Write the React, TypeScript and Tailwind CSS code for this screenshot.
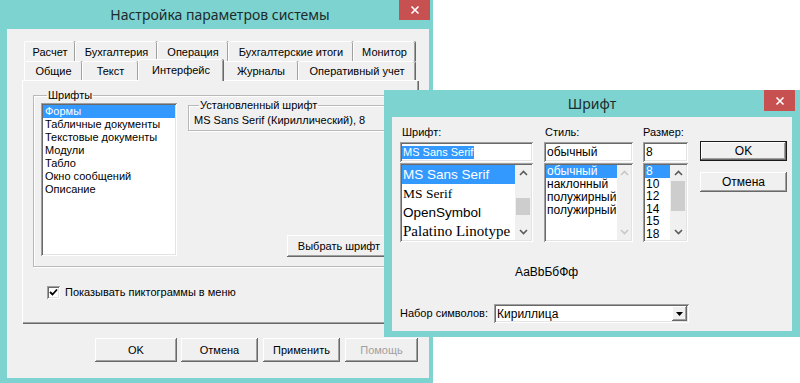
import React from "react";

const RAISED =
  "bg-[#f0f0f0] shadow-[inset_-1px_-1px_#696969,inset_1px_1px_#ffffff,inset_-2px_-2px_#a0a0a0,inset_2px_2px_#f0f0f0]";
const SUNKEN =
  "bg-white shadow-[inset_1px_1px_#a0a0a0,inset_-1px_-1px_#ffffff,inset_2px_2px_#696969,inset_-2px_-2px_#e3e3e3]";

function CloseX() {
  return (
    <svg width="10" height="10" viewBox="0 0 10 10">
      <path d="M1.5 1.5 L8.5 8.5 M8.5 1.5 L1.5 8.5" stroke="#ffffff" strokeWidth="1.6" />
    </svg>
  );
}

function Chevron({ up, color }: { up?: boolean; color: string }) {
  return (
    <svg width="9" height="6" viewBox="0 0 9 6">
      <path
        d={up ? "M1 5 L4.5 1.5 L8 5" : "M1 1 L4.5 4.5 L8 1"}
        stroke={color}
        strokeWidth="1.6"
        fill="none"
      />
    </svg>
  );
}

function VScroll({
  thumbTop,
  thumbH,
  disabled,
}: {
  thumbTop?: number;
  thumbH?: number;
  disabled?: boolean;
}) {
  const c = disabled ? "#c8c8c8" : "#5a5a5a";
  return (
    <div className="w-[16px] h-full flex flex-col bg-[#f0f0f0]">
      <div className="h-[16px] flex items-center justify-center">
        <Chevron up color={c} />
      </div>
      <div className="flex-1 flex flex-col">
        {!disabled && thumbH ? (
          <>
            <div style={{ height: thumbTop }} />
            <div className="bg-[#cdcdcd] mx-[1px]" style={{ height: thumbH }} />
          </>
        ) : null}
      </div>
      <div className="h-[16px] flex items-center justify-center">
        <Chevron color={c} />
      </div>
    </div>
  );
}

function Tab({ label, w, selected }: { label: string; w: number; selected?: boolean }) {
  if (selected) {
    return (
      <div
        className="relative z-10 h-[22px] -mb-[1px] bg-[#f0f0f0] border-t border-l border-white rounded-t-[2px] shadow-[inset_-1px_0_#a0a0a0,1px_0_#696969] flex items-start justify-center pt-[2px]"
        style={{ width: w }}
      >
        {label}
      </div>
    );
  }
  return (
    <div
      className="h-full bg-[#f0f0f0] border-t border-l border-white rounded-t-[2px] shadow-[inset_-1px_0_#a0a0a0,1px_0_#696969] flex items-center justify-center pt-[1px]"
      style={{ width: w }}
    >
      {label}
    </div>
  );
}

function MainWindow() {
  const fontsList = [
    "Формы",
    "Табличные документы",
    "Текстовые документы",
    "Модули",
    "Табло",
    "Окно сообщений",
    "Описание",
  ];
  return (
    <div className="absolute left-0 top-0 w-[433px] h-[383px] bg-[#7dd3d0] flex flex-col pl-[7px] pr-[4px] pb-[5px]">
      <div className="relative h-[29px] flex items-center justify-center">
        <span className="font-['Noto_Sans',sans-serif] text-[14px] text-[#1c2b2b] -mt-[1px] ml-[4px]">
          Настройка параметров системы
        </span>
        <div className="absolute right-[-1px] top-0 w-[31px] h-[20px] bg-[#c75050] flex items-center justify-center">
          <CloseX />
        </div>
      </div>
      <div className="flex-1 bg-[#f0f0f0] flex flex-col pt-[12px] pl-[15px] pr-[11px]">
        {/* tabs row 1 */}
        <div className="flex h-[20px] pl-[2px]">
          <Tab label="Расчет" w={51} />
          <Tab label="Бухгалтерия" w={82} />
          <Tab label="Операция" w={71} />
          <Tab label="Бухгалтерские итоги" w={125} />
          <Tab label="Монитор" w={62} />
        </div>
        {/* tabs row 2 */}
        <div className="flex items-end h-[19px] pl-[2px]">
          <Tab label="Общие" w={58} />
          <Tab label="Текст" w={56} />
          <Tab label="Интерфейс" w={85} selected />
          <Tab label="Журналы" w={75} />
          <Tab label="Оперативный учет" w={117} />
        </div>
        {/* panel */}
        <div className="h-[243px] border-t border-l border-white shadow-[inset_-1px_-1px_#a0a0a0,1px_1px_#696969] flex flex-col">
          <fieldset className="ml-[10px] mt-[8px] w-[377px] h-[178px] border border-[#b9b9b9] shadow-[inset_1px_1px_#ffffff,1px_1px_#ffffff] px-[7px] pt-[1px]">
            <legend className="ml-[6px] px-[1px] leading-[13px]">Шрифты</legend>
            <div className="flex h-[153px]">
              <div className={`w-[136px] h-full ${SUNKEN} p-[2px] flex flex-col`}>
                {fontsList.map((t, i) => (
                  <div
                    key={t}
                    className={
                      i === 0
                        ? "h-[13px] leading-[13px] px-[2px] bg-[#3399ff] text-white"
                        : "h-[13px] leading-[13px] px-[2px]"
                    }
                  >
                    {t}
                  </div>
                ))}
              </div>
              <div className="flex-1 ml-[11px] flex flex-col justify-between">
                <fieldset className="-mt-[4px] h-[32px] border border-[#b9b9b9] shadow-[inset_1px_1px_#ffffff,1px_1px_#ffffff] px-[5px]">
                  <legend className="ml-[5px] px-[1px] leading-[13px]">Установленный шрифт</legend>
                  <div className="leading-[13px] mt-[2px]">MS Sans Serif (Кириллический), 8</div>
                </fieldset>
                <div
                  className={`ml-[99px] w-[104px] h-[22px] ${RAISED} flex items-center justify-center -mb-[1px]`}
                >
                  Выбрать шрифт
                </div>
              </div>
            </div>
          </fieldset>
          <div className="flex items-center ml-[24px] mt-[17px]">
            <div className={`w-[13px] h-[13px] ${SUNKEN} flex items-center justify-center`}>
              <svg width="9" height="9" viewBox="0 0 9 9">
                <path d="M1 4 L3.5 6.5 L8 1.5" stroke="#000" strokeWidth="1.8" fill="none" />
              </svg>
            </div>
            <span className="ml-[5px]">Показывать пиктограммы в меню</span>
          </div>
        </div>
        {/* buttons */}
        <div className="flex justify-end mt-[15px] h-[24px]">
          <div className={`w-[82px] h-full ${RAISED} flex items-center justify-center`}>OK</div>
          <div className={`ml-[4px] w-[77px] h-full ${RAISED} flex items-center justify-center`}>
            Отмена
          </div>
          <div className={`ml-[5px] w-[77px] h-full ${RAISED} flex items-center justify-center`}>
            Применить
          </div>
          <div
            className={`ml-[5px] w-[73px] h-full ${RAISED} flex items-center justify-center text-[#a0a0a0]`}
          >
            Помощь
          </div>
        </div>
      </div>
    </div>
  );
}

function FontDialog() {
  return (
    <div className="absolute left-[384px] top-[90px] w-[416px] h-[247px] bg-[#7dd3d0] flex flex-col px-[8px] pb-[6px]">
      <div className="relative h-[27px] flex items-center justify-center">
        <span className="font-['Noto_Sans',sans-serif] text-[14px] text-[#1c2b2b]">Шрифт</span>
        <div className="absolute right-[-3px] top-0 w-[31px] h-[21px] bg-[#c75050] flex items-center justify-center">
          <CloseX />
        </div>
      </div>
      <div className="flex-1 bg-[#f0f0f0] flex flex-col pl-[8px]">
        <div className="flex">
          {/* font column */}
          <div className="w-[133px] flex flex-col">
            <div className="mt-[9px] h-[13px] leading-[13px] pl-[2px]">Шрифт:</div>
            <div className={`mt-[3px] h-[20px] ${SUNKEN} flex items-center px-[2px]`}>
              <span className="bg-[#3399ff] text-white leading-[13px] px-[1px]">MS Sans Serif</span>
            </div>
            <div className={`mt-[1px] h-[79px] ${SUNKEN} p-[2px] flex`}>
              <div className="flex-1 flex flex-col overflow-hidden">
                <div className="h-[19px] bg-[#3399ff] text-white text-[13.5px] leading-[19px] px-[1px] whitespace-nowrap">
                  MS Sans Serif
                </div>
                <div className="h-[19px] font-['Liberation_Serif',serif] text-[13.5px] leading-[19px] px-[1px] whitespace-nowrap">
                  MS Serif
                </div>
                <div className="h-[19px] text-[13.5px] leading-[19px] px-[1px] whitespace-nowrap">
                  OpenSymbol
                </div>
                <div className="h-[19px] font-['Liberation_Serif',serif] text-[15px] leading-[19px] px-[1px] whitespace-nowrap">
                  Palatino Linotype
                </div>
              </div>
              <VScroll thumbTop={17} thumbH={17} />
            </div>
          </div>
          {/* style column */}
          <div className="ml-[11px] w-[89px] flex flex-col">
            <div className="mt-[9px] h-[13px] leading-[13px] pl-[1px]">Стиль:</div>
            <div className={`mt-[3px] h-[20px] ${SUNKEN} flex items-center px-[3px] text-[12px]`}>
              обычный
            </div>
            <div className={`mt-[1px] h-[79px] ${SUNKEN} p-[2px] flex text-[12px]`}>
              <div className="flex-1 flex flex-col">
                <div className="h-[13px] leading-[13px] px-[1px] bg-[#3399ff] text-white">обычный</div>
                <div className="h-[13px] leading-[13px] px-[1px]">наклонный</div>
                <div className="h-[13px] leading-[13px] px-[1px]">полужирный</div>
                <div className="h-[13px] leading-[13px] px-[1px]">полужирный</div>
              </div>
              <VScroll disabled />
            </div>
          </div>
          {/* size column */}
          <div className="ml-[10px] w-[45px] flex flex-col">
            <div className="mt-[9px] h-[13px] leading-[13px]">Размер:</div>
            <div className={`mt-[3px] h-[20px] ${SUNKEN} flex items-center px-[3px] text-[12px]`}>
              8
            </div>
            <div className={`mt-[1px] h-[79px] ${SUNKEN} p-[2px] flex text-[12px]`}>
              <div className="flex-1 flex flex-col">
                {["8", "10", "12", "14", "15", "18"].map((s, i) => (
                  <div
                    key={s}
                    className={
                      i === 0
                        ? "h-[12.5px] leading-[12.5px] px-[1px] bg-[#3399ff] text-white shrink-0"
                        : "h-[12.5px] leading-[12.5px] px-[1px] shrink-0"
                    }
                  >
                    {s}
                  </div>
                ))}
              </div>
              <VScroll thumbTop={0} thumbH={30} />
            </div>
          </div>
          {/* buttons column */}
          <div className="ml-[12px] w-[87px] flex flex-col">
            <div className="mt-[24px] h-[20px] border border-[#1a1a1a] flex">
              <div className={`flex-1 ${RAISED} flex items-center justify-center text-[12px]`}>OK</div>
            </div>
            <div className={`mt-[11px] h-[20px] ${RAISED} flex items-center justify-center text-[12px]`}>
              Отмена
            </div>
          </div>
        </div>
        <div className="ml-[115px] mt-[24px] h-[13px] leading-[13px] text-[12px]">АаBbБбФф</div>
        <div className="flex items-center mt-[25px]">
          <span className="leading-[13px]">Набор символов:</span>
          <div className={`ml-[6px] w-[195px] h-[19px] ${SUNKEN} flex items-center pl-[3px] pr-[2px]`}>
            <span className="flex-1 text-[12px]">Кириллица</span>
            <div className={`w-[15px] h-[15px] ${RAISED} flex items-center justify-center`}>
              <svg width="7" height="4" viewBox="0 0 7 4">
                <path d="M0 0 L7 0 L3.5 4 Z" fill="#000" />
              </svg>
            </div>
          </div>
        </div>
      </div>
    </div>
  );
}

export default function App() {
  return (
    <div className="relative w-[800px] h-[383px] overflow-hidden bg-white font-['Liberation_Sans',Arial,sans-serif] text-[11px] text-black">
      <MainWindow />
      <FontDialog />
    </div>
  );
}
